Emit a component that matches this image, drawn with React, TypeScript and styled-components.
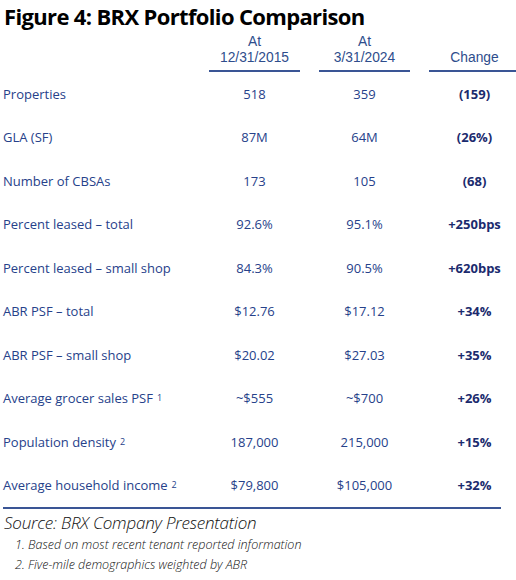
import React from "react";
import styled, { createGlobalStyle } from "styled-components";

const Global = createGlobalStyle`
  html, body { margin: 0; padding: 0; background: #ffffff; }
  body { width: 516px; height: 580px; overflow: hidden; }
`;

const Page = styled.div`
  width: 516px;
  height: 580px;
  padding: 0 0 0 3px;
  box-sizing: border-box;
  font-family: "Open Sans", "Noto Sans", sans-serif;
  color: #26418a;
`;

const Title = styled.h1`
  margin: 0;
  padding: 3px 0 0 1px;
  font-family: "Open Sans", sans-serif;
  font-weight: 700;
  font-size: 22px;
  line-height: 26px;
  letter-spacing: -0.65px;
  color: #000000;
  height: 36px;
  box-sizing: border-box;
`;

const Table = styled.div`
  display: grid;
  grid-template-columns: 187px 91px 91px 91px;
  column-gap: 19px;
  width: 498px;
  border-bottom: 2px solid #3a5595;
`;

const HeadCell = styled.div<{ $col: number }>`
  grid-column: ${(p) => p.$col};
  border-bottom: 2px solid #3a5595;
  text-align: center;
  font-family: "Liberation Sans", Arial, sans-serif;
  font-size: 13.8px;
  color: #2e4d8c;
  padding-bottom: 5px;
  height: 36px;
  display: flex;
  flex-direction: column;
  justify-content: flex-end;
  box-sizing: border-box;
`;

const HeadLine = styled.span`
  display: block;
  line-height: 15.5px;
  height: 15.5px;
`;

const Label = styled.div`
  grid-column: 1;
  height: 43.5px;
  display: flex;
  align-items: center;
  font-size: 13px;
  color: #26418a;
  white-space: nowrap;
`;

const Value = styled.div<{ $bold?: boolean }>`
  height: 43.5px;
  display: flex;
  align-items: center;
  justify-content: center;
  font-size: 13px;
  font-weight: ${(p) => (p.$bold ? 700 : 400)};
  color: ${(p) => (p.$bold ? "#1b2b6e" : "#26418a")};
  white-space: nowrap;
`;

const Sup = styled.sup`
  font-size: 9px;
  margin-left: 4px;
  vertical-align: 5px;
  line-height: 0;
`;

const Source = styled.div`
  font-family: "Open Sans", sans-serif;
  font-style: italic;
  font-weight: 300;
  font-size: 17px;
  line-height: 22px;
  letter-spacing: -0.2px;
  color: #111111;
  margin-top: 3px;
  padding-left: 1px;
`;

const Notes = styled.ol`
  margin: 1px 0 0 0;
  padding: 0 0 0 12px;
  list-style: none;
  font-family: "Open Sans", sans-serif;
  font-style: italic;
  font-weight: 300;
  font-size: 12.5px;
  line-height: 20px;
  color: #111111;
`;

type Row = { label: string; sup?: string; a: string; b: string; c: string };

const rows: Row[] = [
  { label: "Properties", a: "518", b: "359", c: "(159)" },
  { label: "GLA (SF)", a: "87M", b: "64M", c: "(26%)" },
  { label: "Number of CBSAs", a: "173", b: "105", c: "(68)" },
  { label: "Percent leased \u2013 total", a: "92.6%", b: "95.1%", c: "+250bps" },
  { label: "Percent leased \u2013 small shop", a: "84.3%", b: "90.5%", c: "+620bps" },
  { label: "ABR PSF \u2013 total", a: "$12.76", b: "$17.12", c: "+34%" },
  { label: "ABR PSF \u2013 small shop", a: "$20.02", b: "$27.03", c: "+35%" },
  { label: "Average grocer sales PSF", sup: "1", a: "~$555", b: "~$700", c: "+26%" },
  { label: "Population density", sup: "2", a: "187,000", b: "215,000", c: "+15%" },
  { label: "Average household income", sup: "2", a: "$79,800", b: "$105,000", c: "+32%" },
];

export default function App() {
  return (
    <Page>
      <Global />
      <Title>Figure 4: BRX Portfolio Comparison</Title>
      <Table>
        <HeadCell $col={2}>
          <HeadLine>At</HeadLine>
          <HeadLine>12/31/2015</HeadLine>
        </HeadCell>
        <HeadCell $col={3}>
          <HeadLine>At</HeadLine>
          <HeadLine>3/31/2024</HeadLine>
        </HeadCell>
        <HeadCell $col={4}>
          <HeadLine>Change</HeadLine>
        </HeadCell>
        {rows.map((r) => (
          <React.Fragment key={r.label}>
            <Label>
              {r.label}
              {r.sup && <Sup>{r.sup}</Sup>}
            </Label>
            <Value>{r.a}</Value>
            <Value>{r.b}</Value>
            <Value $bold>{r.c}</Value>
          </React.Fragment>
        ))}
      </Table>
      <Source>Source: BRX Company Presentation</Source>
      <Notes>
        <li>1. Based on most recent tenant reported information</li>
        <li>2. Five-mile demographics weighted by ABR</li>
      </Notes>
    </Page>
  );
}
